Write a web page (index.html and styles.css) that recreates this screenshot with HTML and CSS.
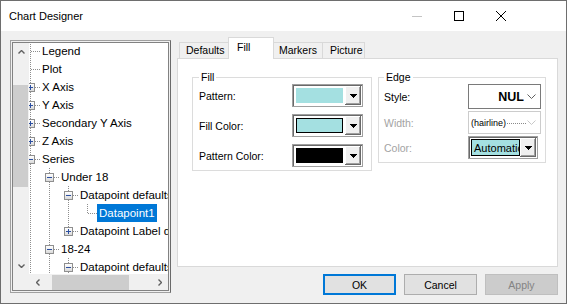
FILE: index.html
```html
<!DOCTYPE html>
<html lang="en">
<head>
    <meta charset="UTF-8">
    <title>Chart Designer</title>
    <link rel="stylesheet" href="styles.css">
</head>
<body>
    <div class="window">
        <div class="titlebar">
            <span class="title">Chart Designer</span>
            <div class="caption">
                <span class="cap"><svg width="10" height="1" viewBox="0 0 10 1"><rect width="10" height="1" fill="#c4c4c4"/></svg></span>
                <span class="cap"><svg width="10" height="10" viewBox="0 0 10 10"><rect x="0.5" y="0.5" width="9" height="9" fill="none" stroke="#000"/></svg></span>
                <span class="cap"><svg width="10" height="10" viewBox="0 0 10 10"><path d="M0 0L10 10M10 0L0 10" stroke="#000" stroke-width="1"/></svg></span>
            </div>
        </div>

        <div class="content">
            <div class="tree">
                <div class="tree-inner">
                    <div class="vscroll">
                        <span class="arrow"><svg width="7" height="4" viewBox="0 0 7 4"><path d="M0.5 3.5L3.5 0.5L6.5 3.5" fill="none" stroke="#606060" stroke-width="1.4"/></svg></span>
                        <div class="vtrack"><span class="vthumb"></span></div>
                        <span class="arrow"><svg width="7" height="4" viewBox="0 0 7 4"><path d="M0.5 0.5L3.5 3.5L6.5 0.5" fill="none" stroke="#606060" stroke-width="1.4"/></svg></span>
                    </div>
                    <div class="nodes">
                        <div class="node-list">
                            <div class="row"><span class="joint"></span><span class="label">Legend</span></div>
                            <div class="row"><span class="joint"></span><span class="label">Plot</span></div>
                            <div class="row"><span class="joint"><span class="exp plus"></span></span><span class="label">X Axis</span></div>
                            <div class="row"><span class="joint"><span class="exp plus"></span></span><span class="label">Y Axis</span></div>
                            <div class="row"><span class="joint"><span class="exp plus"></span></span><span class="label">Secondary Y Axis</span></div>
                            <div class="row"><span class="joint"><span class="exp plus"></span></span><span class="label">Z Axis</span></div>
                            <div class="row"><span class="joint"><span class="exp"></span></span><span class="label">Series</span></div>
                            <div class="row"><span class="guide"></span><span class="joint"><span class="exp"></span></span><span class="label">Under 18</span></div>
                            <div class="row"><span class="guide"></span><span class="guide"></span><span class="joint"><span class="exp"></span></span><span class="label">Datapoint defaults</span></div>
                            <div class="row"><span class="guide"></span><span class="guide"></span><span class="guide"></span><span class="joint last"></span><span class="label selected">Datapoint1</span></div>
                            <div class="row"><span class="guide"></span><span class="guide"></span><span class="joint last"><span class="exp plus"></span></span><span class="label">Datapoint Label defaults</span></div>
                            <div class="row"><span class="guide"></span><span class="joint"><span class="exp"></span></span><span class="label">18-24</span></div>
                            <div class="row"><span class="guide"></span><span class="guide"></span><span class="joint"><span class="exp"></span></span><span class="label">Datapoint defaults</span></div>
                        </div>
                    </div>
                    <div class="corner"></div>
                    <div class="hscroll">
                        <span class="arrow"><svg width="4" height="7" viewBox="0 0 4 7"><path d="M3.5 0.5L0.5 3.5L3.5 6.5" fill="none" stroke="#606060" stroke-width="1.4"/></svg></span>
                        <div class="htrack"><span class="hthumb"></span></div>
                        <span class="arrow"><svg width="4" height="7" viewBox="0 0 4 7"><path d="M0.5 0.5L3.5 3.5L0.5 6.5" fill="none" stroke="#606060" stroke-width="1.4"/></svg></span>
                    </div>
                </div>
            </div>

            <div class="main">
                <div class="tabs">
                    <span class="tab tab-defaults">Defaults</span>
                    <span class="tab active">Fill</span>
                    <span class="tab tab-markers">Markers</span>
                    <span class="tab tab-picture">Picture</span>
                </div>
                <div class="panel">
                    <fieldset class="group group-fill">
                        <legend>Fill</legend>
                        <div class="fields">
                            <span class="field-label">Pattern:</span>
                            <div class="colorpick">
                                <span class="swatch cyan"></span>
                                <span class="drop"><svg width="7" height="4" viewBox="0 0 7 4"><path d="M0 0H7V1H6V2H5V3H4V4H3V3H2V2H1V1H0Z" fill="#000"/></svg></span>
                            </div>
                            <span class="field-label">Fill Color:</span>
                            <div class="colorpick">
                                <span class="swatch cyan framed"></span>
                                <span class="drop"><svg width="7" height="4" viewBox="0 0 7 4"><path d="M0 0H7V1H6V2H5V3H4V4H3V3H2V2H1V1H0Z" fill="#000"/></svg></span>
                            </div>
                            <span class="field-label">Pattern Color:</span>
                            <div class="colorpick">
                                <span class="swatch black"></span>
                                <span class="drop"><svg width="7" height="4" viewBox="0 0 7 4"><path d="M0 0H7V1H6V2H5V3H4V4H3V3H2V2H1V1H0Z" fill="#000"/></svg></span>
                            </div>
                        </div>
                    </fieldset>
                    <fieldset class="group group-edge">
                        <legend>Edge</legend>
                        <div class="fields">
                            <span class="field-label">Style:</span>
                            <div class="select">
                                <span class="select-value">NUL</span>
                                <svg width="9" height="5" viewBox="0 0 9 5"><path d="M0.5 0.5L4.5 4.5L8.5 0.5" fill="none" stroke="#606060"/></svg>
                            </div>
                            <span class="field-label disabled">Width:</span>
                            <div class="select disabled">
                                <span class="hairline">(hairline)</span>
                                <span class="dots"></span>
                                <svg width="9" height="5" viewBox="0 0 9 5"><path d="M0.5 0.5L4.5 4.5L8.5 0.5" fill="none" stroke="#c8c8c8"/></svg>
                            </div>
                            <span class="field-label disabled">Color:</span>
                            <div class="colorpick edge-color">
                                <span class="swatch cyan framed auto">Automatic</span>
                                <span class="drop"><svg width="7" height="4" viewBox="0 0 7 4"><path d="M0 0H7V1H6V2H5V3H4V4H3V3H2V2H1V1H0Z" fill="#000"/></svg></span>
                            </div>
                        </div>
                    </fieldset>
                </div>
                <div class="buttons">
                    <button class="btn default">OK</button>
                    <button class="btn">Cancel</button>
                    <button class="btn" disabled>Apply</button>
                </div>
            </div>
        </div>
    </div>
</body>
</html>
```

FILE: styles.css
```css
* {
    box-sizing: border-box;
}
body {
    margin: 0;
    font-family: "Liberation Sans", Arial, sans-serif;
    font-size: 10.5px;
    color: #000;
    background: #f0f0f0;
}
.window {
    width: 567px;
    height: 304px;
    border: 1px solid #6e6e6e;
    display: flex;
    flex-direction: column;
    background: #f0f0f0;
}

/* title bar */
.titlebar {
    height: 30px;
    flex: none;
    display: flex;
    align-items: center;
    background: #fff;
}
.title {
    padding-left: 8px;
    font-size: 11px;
}
.caption {
    margin-left: auto;
    margin-right: 44px;
    display: flex;
}
.cap {
    width: 42px;
    height: 30px;
    display: flex;
    align-items: center;
    justify-content: center;
}

.content {
    flex: 1;
    display: flex;
    align-items: flex-start;
    padding: 0 8px 0 9px;
}

/* tree */
.tree {
    flex: none;
    width: 161px;
    height: 253px;
    margin-top: 9px;
    padding: 1px;
    border: 1px solid #a0a0a0;
    border-right-color: #6a6a6a;
}
.tree-inner {
    height: 100%;
    border: 1px solid #828282;
    display: grid;
    grid-template-columns: 16px 1fr;
    grid-template-rows: 1fr 16px;
    background: #fff;
}
.vscroll {
    display: flex;
    flex-direction: column;
    background: #f0f0f0;
}
.vscroll .arrow {
    height: 17px;
    display: flex;
    align-items: center;
    justify-content: center;
}
.vtrack {
    flex: 1;
}
.vthumb {
    display: block;
    width: 15px;
    height: 102px;
    margin-top: 25px;
    background: #cdcdcd;
}
.nodes {
    overflow: hidden;
}
.node-list {
    margin: -1px 0 0 -8px;
}
.row {
    display: flex;
    height: 18px;
    white-space: nowrap;
    font-size: 11.5px;
    line-height: 18px;
}
.guide {
    flex: none;
    width: 19px;
    background-image: repeating-linear-gradient(to bottom, #8e8e8e 0 1px, transparent 1px 2px);
    background-repeat: no-repeat;
    background-position: 9px 0;
    background-size: 1px 18px;
}
.joint {
    flex: none;
    width: 19px;
    display: flex;
    justify-content: center;
    align-items: flex-start;
    background-image: repeating-linear-gradient(to bottom, #8e8e8e 0 1px, transparent 1px 2px),
        repeating-linear-gradient(to right, #8e8e8e 0 1px, transparent 1px 2px);
    background-repeat: no-repeat;
    background-position: 9px 0, 10px 9px;
    background-size: 1px 18px, 9px 1px;
}
.joint.last {
    background-size: 1px 10px, 9px 1px;
}
.exp {
    width: 9px;
    height: 9px;
    margin-top: 5px;
    border: 1px solid #8f8f8f;
    background: linear-gradient(#2c4fa0, #2c4fa0) center / 5px 1px no-repeat,
        linear-gradient(#fff, #dadada);
}
.exp.plus {
    background: linear-gradient(#2c4fa0, #2c4fa0) center / 5px 1px no-repeat,
        linear-gradient(#2c4fa0, #2c4fa0) center / 1px 5px no-repeat,
        linear-gradient(#fff, #dadada);
}
.label {
    padding: 0 2px;
}
.label.selected {
    background: #0078d7;
    color: #fff;
}
.corner {
    background: #f0f0f0;
}
.hscroll {
    display: flex;
    align-items: center;
    background: #f0f0f0;
}
.hscroll .arrow {
    width: 17px;
    display: flex;
    justify-content: center;
}
.htrack {
    flex: 1;
    height: 100%;
}
.hthumb {
    display: block;
    width: 77px;
    height: 15px;
    margin: 1px 0 0 6px;
    background: #cdcdcd;
}

/* tabs */
.main {
    flex: none;
    width: 381px;
    margin: 6px 0 0 6px;
    display: flex;
    flex-direction: column;
}
.tabs {
    height: 21px;
    display: flex;
    align-items: flex-end;
    padding-left: 2px;
}
.tab {
    height: 16px;
    padding-left: 6px;
    border: 1px solid #d9d9d9;
    border-bottom: 0;
    background: #f0f0f0;
    line-height: 14px;
    margin-left: -1px;
}
.tab:first-child {
    margin-left: 0;
}
.tab-defaults {
    width: 50px;
}
.tab-markers {
    width: 50px;
    padding-left: 5px;
}
.tab-picture {
    width: 43px;
    padding-left: 7px;
}
.tab.active {
    position: relative;
    z-index: 1;
    width: 46px;
    height: 22px;
    margin-bottom: -1px;
    padding: 2px 0 0 8px;
    background: #fff;
}
.panel {
    height: 209px;
    border: 1px solid #d9d9d9;
    background: #fff;
    padding: 12px 0 0 14px;
    display: flex;
    align-items: flex-start;
    gap: 6px;
}
.group {
    margin: 0;
    min-width: 0;
    border: 1px solid #dcdcdc;
}
.group legend {
    padding: 0 2px;
    line-height: 12px;
}
.group-fill {
    width: 180px;
    padding: 1px 8px 3px 6px;
}
.group-edge {
    width: 168px;
    padding: 1px 4px 3px 5px;
}
.fields {
    display: grid;
    align-items: center;
}
.group-fill .fields {
    grid-template-columns: 93px 71px;
    grid-template-rows: 23px 23px 23px;
    row-gap: 7px;
}
.group-edge .fields {
    grid-template-columns: 84px 73px;
    grid-template-rows: 25px 23px 23px;
    row-gap: 2px;
}
.field-label.disabled {
    color: #a3a3a3;
}

/* colour pickers */
.colorpick {
    height: 100%;
    display: flex;
    padding: 1px;
    border: 1px solid #a0a0a0;
    box-shadow: inset 1px 1px 0 #696969;
    background: #fff;
}
.swatch {
    flex: 1;
    margin: 2px;
}
.swatch.cyan {
    background: #a4e0e1;
}
.swatch.black {
    background: #000;
}
.swatch.framed {
    border: 1px solid #000;
}
.swatch.auto {
    margin: 1px 0 1px 1px;
    padding-left: 2px;
    overflow: hidden;
    white-space: nowrap;
    font-size: 11px;
    line-height: 17px;
}
.drop {
    width: 16px;
    display: flex;
    align-items: center;
    justify-content: center;
    background: #f0f0f0;
    box-shadow: inset -1px -1px 0 #696969, inset 1px 1px 0 #fff, inset -2px -2px 0 #a0a0a0;
}
.edge-color {
    width: 70px;
}

/* edge selects */
.select {
    height: 100%;
    display: flex;
    align-items: center;
    justify-content: flex-end;
    gap: 3px;
    padding: 0 4px 0 2px;
    border: 1px solid #7a7a7a;
    background: #fff;
}
.select-value {
    font-weight: bold;
    font-size: 12.5px;
}
.select.disabled {
    border-color: #cccccc;
    justify-content: flex-start;
    gap: 1px;
}
.hairline {
    font-size: 9px;
}
.dots {
    flex: 1;
    height: 1px;
    margin-top: 2px;
    background: repeating-linear-gradient(to right, #8a8a8a 0 1px, transparent 1px 2px);
}

/* buttons */
.buttons {
    display: flex;
    justify-content: flex-end;
    gap: 8px;
    margin-top: 7px;
}
.btn {
    width: 73px;
    height: 21px;
    padding: 0;
    font-family: inherit;
    font-size: 10.5px;
    color: #000;
    background: #e1e1e1;
    border: 1px solid #adadad;
}
.btn.default {
    border: 2px solid #0078d7;
}
.btn:disabled {
    background: #cccccc;
    border-color: #bfbfbf;
    color: #838383;
}
```
